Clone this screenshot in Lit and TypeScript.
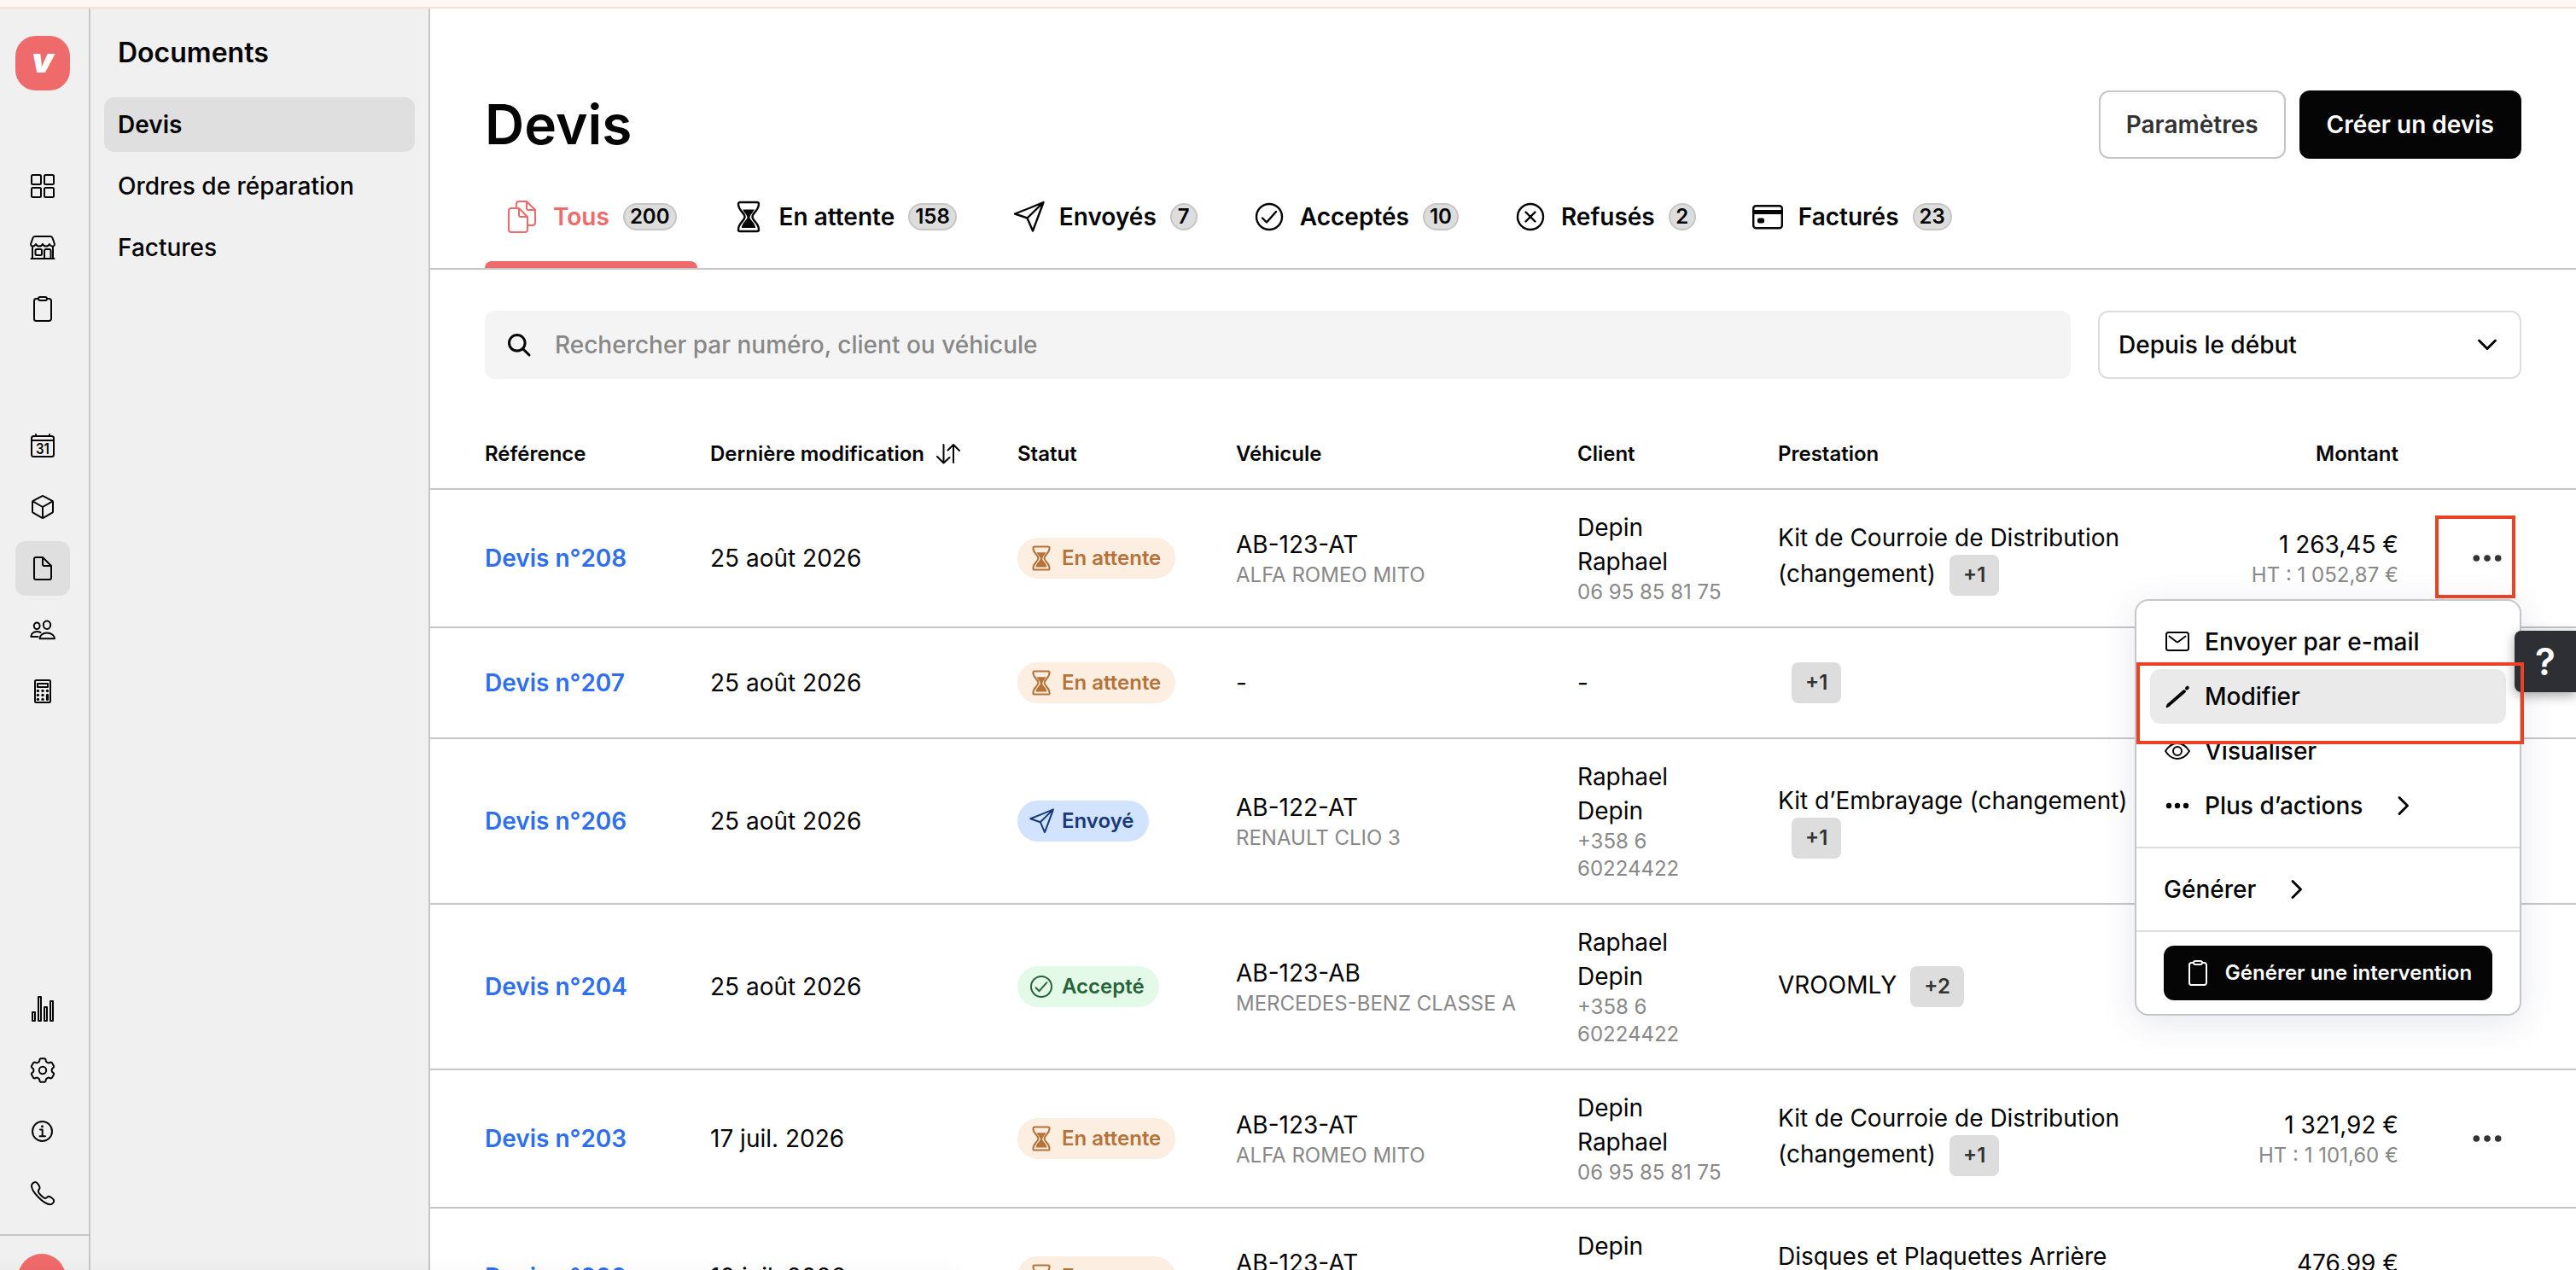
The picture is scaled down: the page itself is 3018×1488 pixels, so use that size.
import { LitElement, html, svg, css } from "lit";
import { customElement } from "lit/decorators.js";
import { classMap } from "lit/directives/class-map.js";

const icon = (size: number, body: unknown, sw = 2) => html`<svg
  class="ic" width=${size} height=${size} viewBox="0 0 ${size} ${size}" fill="none"
  stroke="currentColor" stroke-width=${sw} stroke-linecap="round" stroke-linejoin="round">${body}</svg>`;

const gearPath = (() => {
  const pts: string[] = [];
  const tooth = [[-5.2, -9.2], [-3.9, -10.4], [-3.4, -13], [-2.4, -13.8], [2.4, -13.8], [3.4, -13], [3.9, -10.4], [5.2, -9.2]];
  for (let k = 0; k < 6; k++) {
    const a = (k * Math.PI) / 3;
    for (const [x, y] of tooth) {
      pts.push(`${(16 + x * Math.cos(a) - y * Math.sin(a)).toFixed(2)} ${(16 + x * Math.sin(a) + y * Math.cos(a)).toFixed(2)}`);
    }
  }
  return "M" + pts.join("L") + "Z";
})();

const clipboard = svg`<path d="M11 4H8.500a2.500 2.500 0 0 0-2.500 2.500V27.500a2.500 2.500 0 0 0 2.500 2.500h15a2.500 2.500 0 0 0 2.500-2.500V6.500a2.500 2.500 0 0 0-2.500-2.500H21"/><rect x="11" y="2" width="10" height="4" rx="2"/>`;
const hourglass = svg`<path d="M10 3h20a2 2 0 0 1 2 2c0 8-7.500 10-7.500 15s7.500 7 7.500 15a2 2 0 0 1-2 2H10a2 2 0 0 1-2-2c0-8 7.500-10 7.500-15S8 13 8 5a2 2 0 0 1 2-2z"/><path fill="currentColor" stroke="none" d="M13.200 11.500h13.600c-1.300 3.500-4.600 5.200-5.300 9-.1 3.500 5.500 5.500 6.700 12.500H11.800c1.200-7 6.800-9 6.700-12.500-.7-3.800-4-5.500-5.300-9z"/>`;
const plane = svg`<path d="M37.500 3 Q20 10.500 4 16.500 L18.500 21.500 25 36.500 Q32 18 37.500 3ZM18.500 21.500 37.500 3"/>`;
const check = svg`<circle cx="20" cy="20" r="15"/><path d="m12 21.500 5 5L28 14"/>`;

const I = {
  grid: icon(32, svg`<rect x="3" y="3" width="11" height="11" rx="1.500"/><rect x="18" y="3" width="11" height="11" rx="1.500"/><rect x="3" y="18" width="11" height="11" rx="1.500"/><rect x="18" y="18" width="11" height="11" rx="1.500"/>`),
  store: icon(32, svg`<path d="M7 3h18c1.500 0 2.200.8 2.600 2l2.200 6.500c.4 2-.6 3-2.200 3-1.800 0-3-1-3.600-2.500-.8 1.800-2 2.500-4 2.500s-3.200-.8-4-2.500c-.8 1.800-2 2.500-4 2.500s-3.200-.8-4-2.500c-.8 1.500-1.800 2.500-3.600 2.500s-2.600-1-2.200-3L4.400 5C4.800 3.800 5.500 3 7 3zM4 15v14M28 15v14M2.500 29h27M18 29V20a2 2 0 0 1 2-2h3.500a2 2 0 0 1 2 2v9"/><rect x="7.500" y="18" width="7.500" height="7" rx="1.500"/>`),
  clip: icon(32, clipboard),
  cal: icon(32, svg`<rect x="3" y="5" width="26" height="24" rx="2.500"/><path d="M3 10h26M8 3v2M24 3v2"/><text class="cal" x="16" y="26.300" text-anchor="middle" textLength="16" lengthAdjust="spacingAndGlyphs">31</text>`),
  cube: icon(32, svg`<path d="M17 3.300 27.300 8.800a1.500 1.500 0 0 1 .7 1.200v11.500a1.500 1.500 0 0 1-.7 1.200L17 28.700a2 2 0 0 1-2 0L4.700 22.700a1.500 1.500 0 0 1-.7-1.200V10a1.500 1.500 0 0 1 .7-1.200L15 3.300a2 2 0 0 1 2 0zM4.500 9.300 16 16l11.500-6.700M16 16v13"/>`),
  file: icon(32, svg`<path d="M16 3H8a2 2 0 0 0-2 2v22a2 2 0 0 0 2 2h16a2 2 0 0 0 2-2V13zv8a2 2 0 0 0 2 2h8"/>`),
  users: icon(32, svg`<ellipse cx="21" cy="10.300" rx="4.200" ry="4.700"/><ellipse cx="9.200" cy="11.300" rx="3.400" ry="3.800"/><path d="M12.500 26.200c0-3.700 3.700-6.600 8.500-6.600s9 2.900 9 6.600zM13.500 19c-1.200-.6-2.600-.9-4.300-.9-3.900 0-6.900 2.700-6.900 6h8.200"/>`),
  calc: icon(32, svg`<rect x="7" y="3" width="18" height="26" rx="1.500"/><rect x="10" y="7" width="12" height="4"/><g fill="currentColor" stroke="none"><circle cx="10.400" cy="15.400" r="1.700"/><circle cx="16" cy="15.400" r="1.700"/><circle cx="21.500" cy="15.400" r="1.700"/><circle cx="10.400" cy="20.400" r="1.700"/><circle cx="16" cy="20.400" r="1.700"/><circle cx="10.400" cy="25.400" r="1.700"/><circle cx="16" cy="25.400" r="1.700"/><rect x="19.900" y="18.800" width="3.200" height="8.300" rx="1.600"/></g>`),
  chart: icon(32, svg`<rect x="4" y="20" width="3" height="10"/><rect x="11" y="2" width="3" height="28"/><rect x="18" y="14" width="3" height="16"/><rect x="25" y="7" width="3" height="23"/>`),
  gear: icon(32, svg`<path d=${gearPath}/><circle cx="16" cy="16" r="4.200"/>`),
  info: icon(32, svg`<circle cx="15.500" cy="15.500" r="11.500"/><path d="M13 13.500h2.700v7.500M12.500 21.300h6.500"/><circle cx="15.500" cy="9.700" r="1.500" fill="currentColor" stroke="none"/>`),
  phone: icon(32, svg`<path d="M7.500 3C9.500 3 12.600 8 12.600 9.500 12.600 11.200 10.800 12 10.800 13.800 10.800 16 17 22 19.200 22 20.800 22 21.400 19.800 23 19.800 24.600 19.800 29.200 22.800 29.200 25 29.200 27 27 29.200 25 29.200 17 29.200 3 14 3 7.500 3 5 5.500 3 7.500 3Z"/>`),
  docs: icon(40, svg`<path d="M16 10H7a3 3 0 0 0-3 3v22a3 3 0 0 0 3 3h16a3 3 0 0 0 3-3V20zv8a2 2 0 0 0 2 2h8M13 10V5a3 3 0 0 1 3-3h9l10 10v15a3 3 0 0 1-3 3h-6M25 2v8a2 2 0 0 0 2 2h8"/>`),
  hour: icon(40, hourglass, 2.4),
  plane: icon(40, plane, 2.4),
  check: icon(40, check, 2.4),
  cross: icon(40, svg`<circle cx="20" cy="20" r="15"/><path d="m14.500 14.500 11 11m0-11-11 11"/>`, 2.4),
  card: icon(40, svg`<rect x="3.200" y="7.200" width="33.600" height="26" rx="3"/><path d="M3 14.500h34" stroke-width="5" stroke-linecap="butt"/><rect x="8" y="21.500" width="8" height="6" rx="2" fill="currentColor" stroke="none"/>`, 2.4),
  search: icon(32, svg`<circle cx="13.800" cy="13.800" r="9.300"/><path d="m21 21 7 7"/>`, 3),
  down: icon(24, svg`<path d="m2.500 7 9.500 9.500L21.500 7"/>`, 3),
  right: icon(24, svg`<path d="m7 2.500 9.500 9.500L7 21.500"/>`, 3),
  sort: icon(32, svg`<path d="M10.500 5v21.500M3 19l7.500 7.500L17.500 20M22 26V5M15.500 11.500 22 5l7 7"/>`),
  mail: icon(32, svg`<rect x="3" y="5" width="26" height="21" rx="2.500"/><path d="m6.500 9.500 8.200 6.300a2 2 0 0 0 2.600 0l8.200-6.300"/>`),
  pen: icon(32, svg`<path d="M5.500 26 24 10" stroke-width="3.800"/><path d="M4 27.800 6 26" stroke-width="2.600"/><path d="m27 6.400.8-.7" stroke-width="4"/>`),
  eye: icon(32, svg`<path d="M2 16c3.500-5.500 8.500-9 14-9s10.500 3.500 14 9c-3.500 5.500-8.500 9-14 9S5.500 21.500 2 16z"/><circle cx="16" cy="16" r="5"/>`),
  more: icon(32, svg`<g fill="currentColor" stroke="none"><circle cx="6" cy="16" r="3.200"/><circle cx="16" cy="16" r="3.200"/><circle cx="26" cy="16" r="3.200"/></g>`),
  dots: icon(40, svg`<g fill="currentColor" stroke="none"><circle cx="7.300" cy="20" r="3.800"/><circle cx="20" cy="20" r="3.800"/><circle cx="32.700" cy="20" r="3.800"/></g>`),
};

const small = (body: unknown) => html`<svg class="ic" width="32" height="32" viewBox="0 0 40 40" fill="none"
  stroke="currentColor" stroke-width="2.500" stroke-linecap="round" stroke-linejoin="round">${body}</svg>`;

const STATUS: Record<string, { label: string; icon: unknown }> = {
  pending: { label: "En attente", icon: small(hourglass) },
  sent: { label: "Envoyé", icon: small(plane) },
  accepted: { label: "Accepté", icon: small(check) },
};

interface Quote {
  ref: string; date: string; status: string;
  plate?: string; model?: string;
  names?: string[]; phone?: string[];
  service: string; extra: string;
  ttc?: string; ht?: string;
}

const QUOTES: Quote[] = [
  { ref: "208", date: "25 août 2026", status: "pending", plate: "AB-123-AT", model: "ALFA ROMEO MITO", names: ["Depin", "Raphael"], phone: ["06 95 85 81 75"], service: "Kit de Courroie de Distribution (changement)", extra: "+1", ttc: "1 263,45 €", ht: "HT : 1 052,87 €" },
  { ref: "207", date: "25 août 2026", status: "pending", service: "", extra: "+1" },
  { ref: "206", date: "25 août 2026", status: "sent", plate: "AB-122-AT", model: "RENAULT CLIO 3", names: ["Raphael", "Depin"], phone: ["+358 6", "60224422"], service: "Kit d’Embrayage (changement)", extra: "+1" },
  { ref: "204", date: "25 août 2026", status: "accepted", plate: "AB-123-AB", model: "MERCEDES-BENZ CLASSE A", names: ["Raphael", "Depin"], phone: ["+358 6", "60224422"], service: "VROOMLY", extra: "+2" },
  { ref: "203", date: "17 juil. 2026", status: "pending", plate: "AB-123-AT", model: "ALFA ROMEO MITO", names: ["Depin", "Raphael"], phone: ["06 95 85 81 75"], service: "Kit de Courroie de Distribution (changement)", extra: "+1", ttc: "1 321,92 €", ht: "HT : 1 101,60 €" },
  { ref: "202", date: "10 juil. 2026", status: "pending", plate: "AB-123-AT", model: "ALFA ROMEO MITO", names: ["Depin", "Raphael"], phone: ["06 95 85 81 75"], service: "Disques et Plaquettes Arrière (changement)", extra: "+1", ttc: "476,99 €", ht: "HT : 397,49 €" },
];

const TABS = [
  { icon: I.docs, label: "Tous", count: 200 },
  { icon: I.hour, label: "En attente", count: 158 },
  { icon: I.plane, label: "Envoyés", count: 7 },
  { icon: I.check, label: "Acceptés", count: 10 },
  { icon: I.cross, label: "Refusés", count: 2 },
  { icon: I.card, label: "Facturés", count: 23 },
];

@customElement("app-root")
export class AppRoot extends LitElement {
  static styles = css`
    :host { display: block; position: relative; width: 3018px; height: 1488px; overflow: hidden; background: #fff; color: #050505;
      font-family: Inter, "Liberation Sans", sans-serif; font-size: 28px; line-height: 40px; }
    * { box-sizing: border-box; }
    .ic { display: block; flex: none; }
    .cal { font: 600 17px Inter, sans-serif; fill: currentColor; stroke: none; }
    .strip { height: 10px; background: #fdf8f4; border-bottom: 2px solid #f2e2d6; }
    .shell { display: flex; height: 1478px; }

    .rail { width: 106px; flex: none; background: #f0f0f0; border-right: 2px solid #c6c6c6; display: flex; flex-direction: column; padding-top: 32px; }
    .logo { width: 64px; height: 64px; margin: 0 0 80px 18px; border-radius: 24px; background: #ef6a6a; color: #fff;
      display: flex; align-items: center; justify-content: center; font-size: 41px; font-weight: 900; font-style: italic; line-height: 52px; padding-bottom: 8px; }
    .group { display: flex; flex-direction: column; gap: 8px; padding-left: 18px; }
    .group.mid { margin-top: 96px; }
    .group.low { margin-top: auto; padding-bottom: 16px; }
    .tile { width: 64px; height: 64px; border-radius: 12px; display: flex; align-items: center; justify-content: center; }
    .tile.on { background: #dfdfdf; }
    .me { height: 42px; border-top: 2px solid #c6c6c6; padding: 21px 0 0 21px; overflow: hidden; }
    .avatar { width: 56px; height: 56px; border-radius: 28px; background: #ef6a6a; color: #fff; font-size: 26px; line-height: 58px; text-align: center; }

    .sub { width: 398px; flex: none; background: #f0f0f0; border-right: 2px solid #c6c6c6; padding: 32px 16px 0; }
    .subtitle { font-size: 32px; font-weight: 600; padding-left: 16px; margin-bottom: 32px; }
    .links { display: flex; flex-direction: column; gap: 8px; }
    .link { height: 64px; border-radius: 12px; padding: 12px 16px; font-weight: 500; }
    .link.on { background: #dfdfdf; font-weight: 600; }

    .main { flex: 1; min-width: 0; padding-top: 96px; display: flex; flex-direction: column; }
    .head { display: flex; align-items: center; justify-content: space-between; height: 80px; padding: 0 64px; }
    .title { font-size: 64px; font-weight: 600; line-height: 80px; margin: 0; }
    .actions { display: flex; gap: 16px; }
    .btn { height: 80px; border-radius: 12px; padding: 0 30px; line-height: 76px; border: 2px solid #c6c6c6; font-weight: 600; color: #333; }
    .btn.dark { background: #050505; border-color: #050505; color: #fff; }

    .tabs { display: flex; gap: 16px; height: 130px; flex: none; padding: 8px 64px 0; border-bottom: 2px solid #c6c6c6; }
    .tab { position: relative; display: flex; align-items: center; gap: 16px; padding: 0 24px; font-weight: 600; }
    .tab.on { color: #ef6a6a; }
    .tab.on::after { content: ""; position: absolute; left: 0; right: 0; bottom: 0; height: 8px; border-radius: 8px 8px 0 0; background: #ef6a6a; }
    .count { height: 32px; min-width: 32px; border: 2px solid #c6c6c6; background: #ddd; border-radius: 16px; color: #050505; font-size: 24px; line-height: 28px; padding: 0 6px; text-align: center; }

    .filters { display: flex; gap: 32px; padding: 0 64px; margin-top: 48px; }
    .search { flex: 1; height: 80px; border-radius: 12px; background: #f4f4f4; display: flex; align-items: center; gap: 26px; padding: 0 24px; }
    .hint { color: #888; font-weight: 500; }
    .select { width: 496px; height: 80px; border: 2px solid #ddd; border-radius: 12px; display: flex; align-items: center; justify-content: space-between; padding: 0 26px 0 22px; font-weight: 500; }

    .row { display: grid; grid-template-columns: 264px 360px 256px 400px 235px 440px 287px 144px; align-items: center;
      padding: 24px 64px; border-bottom: 2px solid #c6c6c6; min-height: 130px; flex: none; }
    .row.th { min-height: 84px; height: 84px; padding-top: 2px; padding-bottom: 0; margin-top: 46px; font-size: 24px; font-weight: 600; }
    .sort { display: flex; align-items: center; gap: 12px; }
    .ref { color: #2f6fed; font-weight: 600; }
    .end { text-align: right; }
    .sm { font-size: 24px; line-height: 32px; color: #888; white-space: nowrap; }
    .pill { display: inline-flex; align-items: center; gap: 8px; height: 48px; border-radius: 24px; padding: 0 17px 0 12px; font-size: 24px; font-weight: 600; vertical-align: top; }
    .pending { background: #fceee1; color: #b5733a; }
    .sent { background: #d1e3fe; color: #1a3978; }
    .accepted { background: #e2fae7; color: #27633a; }
    .plus { display: inline-block; height: 48px; line-height: 48px; border-radius: 8px; background: #ddd; color: #333; font-size: 24px; font-weight: 600; padding: 0 16px; margin-left: 16px; }
    .more { display: flex; justify-content: flex-end; padding-right: 20px; color: #333; }

    .menu { position: absolute; left: 2501px; top: 702px; width: 453px; height: 488px; background: #fff; border: 2px solid #c6c6c6; border-radius: 16px;
      box-shadow: 0 8px 40px rgba(60, 70, 130, .13); font-weight: 500; }
    .block { padding: 16px; }
    .block + .block { border-top: 2px solid #ddd; }
    .item { height: 64px; border-radius: 12px; padding: 0 16px; display: flex; align-items: center; gap: 16px; }
    .item.on { background: #eaeaea; }
    .item .chev { margin-left: 20px; }
    .cta { height: 64px; margin: 0 16px; border-radius: 12px; background: #050505; color: #fff; font-size: 24px; font-weight: 600; display: flex; align-items: center; justify-content: center; gap: 16px; }
    .help { position: absolute; left: 2946px; top: 739px; width: 72px; height: 72px; border-radius: 8px 0 0 8px; background: #2e2f35; color: #fff; font-size: 44px; font-weight: 600; line-height: 72px; text-align: center; box-shadow: 0 4px 14px rgba(0, 0, 0, .35); }
    .mark { position: absolute; border: 4px solid #eb4226; }
    .m1 { left: 2853px; top: 604px; width: 94px; height: 97px; }
    .m2 { left: 2503px; top: 776px; width: 454px; height: 96px; }
    .haze { position: absolute; left: -40px; top: 1492px; width: 1160px; height: 40px; box-shadow: 0 0 24px rgba(0, 0, 0, .05); }
  `;

  private tile(icon: unknown, on = false) {
    return html`<div class=${classMap({ tile: true, on })}>${icon}</div>`;
  }

  private row(q: Quote) {
    const s = STATUS[q.status];
    return html`<div class="row">
      <div class="ref">Devis n°${q.ref}</div>
      <div>${q.date}</div>
      <div><span class="pill ${q.status}">${s.icon}<span>${s.label}</span></span></div>
      <div>${q.plate ? html`<div>${q.plate}</div><div class="sm">${q.model}</div>` : "-"}</div>
      <div>${q.names ? html`${q.names.map((n) => html`<div>${n}</div>`)}${q.phone!.map((p) => html`<div class="sm">${p}</div>`)}` : "-"}</div>
      <div>${q.service}<span class="plus">${q.extra}</span></div>
      <div class="end">${q.ttc ? html`<div>${q.ttc}</div><div class="sm">${q.ht}</div>` : ""}</div>
      <div class="more">${I.dots}</div>
    </div>`;
  }

  render() {
    return html`
      <div class="strip"></div>
      <div class="shell">
        <nav class="rail">
          <div class="logo">v</div>
          <div class="group">${this.tile(I.grid)}${this.tile(I.store)}${this.tile(I.clip)}</div>
          <div class="group mid">${this.tile(I.cal)}${this.tile(I.cube)}${this.tile(I.file, true)}${this.tile(I.users)}${this.tile(I.calc)}</div>
          <div class="group low">${this.tile(I.chart)}${this.tile(I.gear)}${this.tile(I.info)}${this.tile(I.phone)}</div>
          <div class="me"><div class="avatar">G</div></div>
        </nav>
        <nav class="sub">
          <div class="subtitle">Documents</div>
          <div class="links">
            <div class="link on">Devis</div>
            <div class="link">Ordres de réparation</div>
            <div class="link">Factures</div>
          </div>
        </nav>
        <main class="main">
          <div class="head">
            <h1 class="title">Devis</h1>
            <div class="actions"><div class="btn">Paramètres</div><div class="btn dark">Créer un devis</div></div>
          </div>
          <div class="tabs">
            ${TABS.map((t, i) => html`<div class=${classMap({ tab: true, on: i === 0 })}>${t.icon}<span>${t.label}</span><span class="count">${t.count}</span></div>`)}
          </div>
          <div class="filters">
            <div class="search">${I.search}<span class="hint">Rechercher par numéro, client ou véhicule</span></div>
            <div class="select"><span>Depuis le début</span>${I.down}</div>
          </div>
          <div class="row th">
            <div>Référence</div>
            <div class="sort">Dernière modification ${I.sort}</div>
            <div>Statut</div><div>Véhicule</div><div>Client</div><div>Prestation</div>
            <div class="end">Montant</div><div></div>
          </div>
          ${QUOTES.map((q) => this.row(q))}
        </main>
      </div>
      <div class="haze"></div>
      <div class="menu">
        <div class="block">
          <div class="item">${I.mail}<span>Envoyer par e-mail</span></div>
          <div class="item on">${I.pen}<span>Modifier</span></div>
          <div class="item">${I.eye}<span>Visualiser</span></div>
          <div class="item">${I.more}<span>Plus d’actions</span><span class="chev">${I.right}</span></div>
        </div>
        <div class="block"><div class="item"><span>Générer</span><span class="chev">${I.right}</span></div></div>
        <div class="block"><div class="cta">${I.clip}<span>Générer une intervention</span></div></div>
      </div>
      <div class="help">?</div>
      <div class="mark m1"></div>
      <div class="mark m2"></div>
    `;
  }
}
